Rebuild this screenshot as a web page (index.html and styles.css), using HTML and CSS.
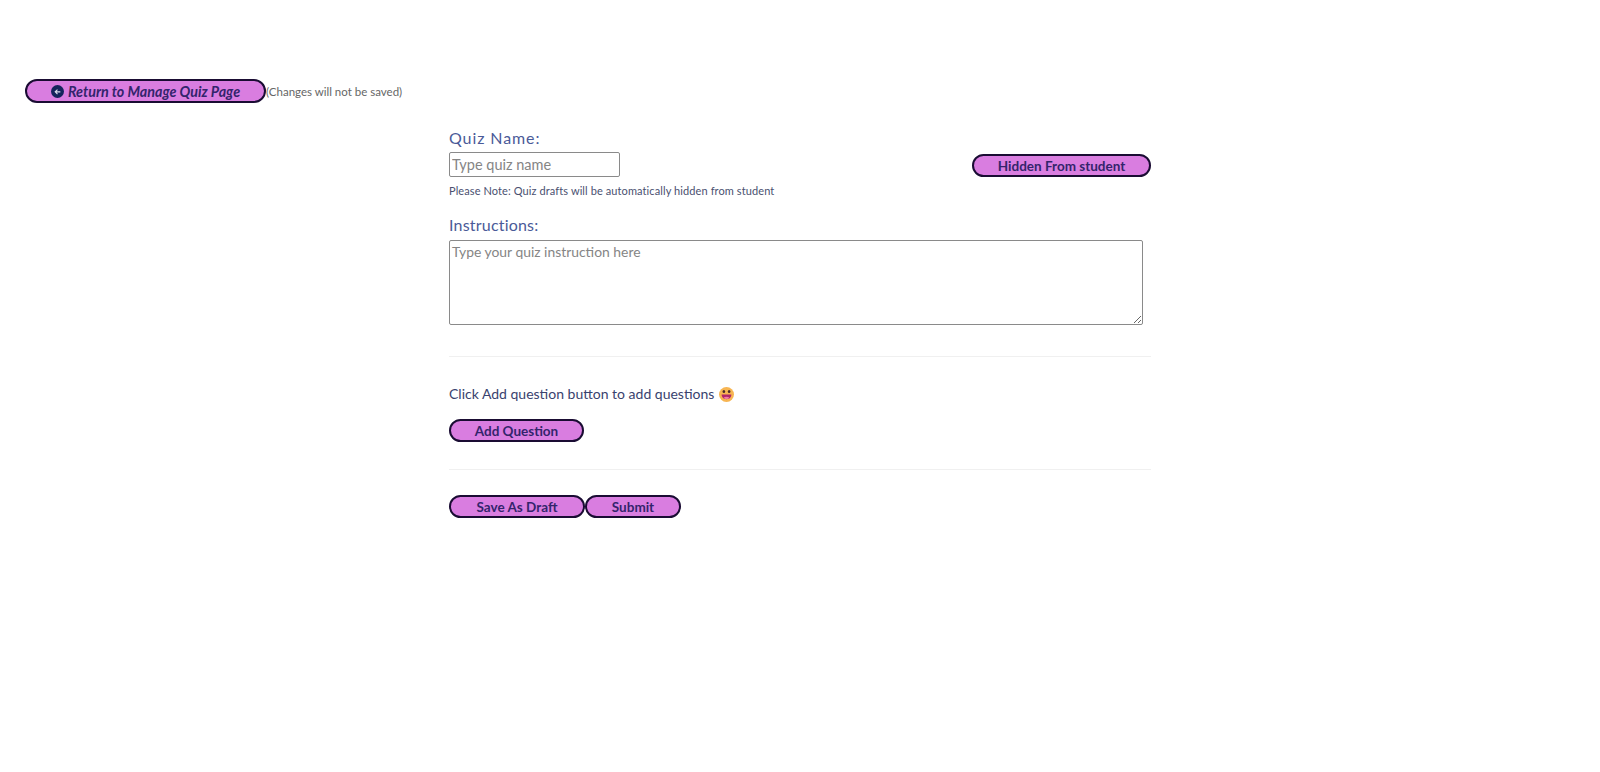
FILE: index.html
```html
<!DOCTYPE html>
<html lang="en">
<head>
  <meta charset="UTF-8" />
  <meta name="viewport" content="width=device-width, initial-scale=1.0"/>
  <title>Create Quiz</title>
  <link rel="stylesheet" href="styles.css">
</head>
<body>

  <div class="back-row">
    <button class="pill back-btn">
      <svg class="back-icon" viewBox="0 0 16 16" width="13" height="13">
        <circle cx="8" cy="8" r="8" fill="#14245c"/>
        <path d="M11.5 8.4H5.5M8 5.6L5.2 8.4L8 11.2" fill="none" stroke="#d9dcec" stroke-width="1.4"/>
      </svg>
      Return to Manage Quiz Page
    </button>
    <span class="back-note">(Changes will not be saved)</span>
  </div>

  <form class="quiz-form">
    <h3 class="field-title quiz-title">Quiz Name:</h3>
    <div class="name-row">
      <input class="name-input" type="text" placeholder="Type quiz name">
      <button type="button" class="pill hidden-btn">Hidden From student</button>
    </div>
    <p class="note">Please Note: Quiz drafts will be automatically hidden from student</p>

    <h3 class="field-title instr-title">Instructions:</h3>
    <textarea class="instr-input" placeholder="Type your quiz instruction here"></textarea>

    <hr class="line first-line">

    <p class="add-text">
      Click Add question button to add questions
      <svg class="emoji" viewBox="0 0 16 16" width="15" height="15">
        <circle cx="8" cy="8" r="8" fill="#f7b552"/>
        <ellipse cx="5.2" cy="4.8" rx="1.4" ry="1.7" fill="#4a2a2a"/>
        <ellipse cx="10.8" cy="4.8" rx="1.4" ry="1.7" fill="#4a2a2a"/>
        <path d="M2.8 8h10.4c0 3-2.4 5-5.2 5S2.8 11 2.8 8z" fill="#b0246a"/>
        <path d="M5 11.2c1.6-1.1 4.4-1.1 6 0c-1.6 2.2-4.4 2.2-6 0z" fill="#f07aa6"/>
      </svg>
    </p>
    <button type="button" class="pill add-btn">Add Question</button>

    <hr class="line second-line">

    <div class="actions">
      <button type="button" class="pill draft-btn">Save As Draft</button>
      <button type="submit" class="pill submit-btn">Submit</button>
    </div>
  </form>

</body>
</html>
```

FILE: styles.css
```css
body {
  font-family: 'Lato', 'Noto Sans', sans-serif;
  background: #fff;
  color: #2f3a66;
  margin: 0;
  padding: 79px 0 0;
}

.pill {
  background: #d97de0;
  color: #33246c;
  font-family: 'Lato', sans-serif;
  font-size: 13.5px;
  font-weight: 700;
  height: 23px;
  padding: 0;
  border: 2px solid #1a0c33;
  border-radius: 14px;
  box-sizing: border-box;
  white-space: nowrap;
}

.back-row {
  display: flex;
  align-items: center;
  padding-left: 25px;
}

.back-btn {
  width: 241px;
  height: 24px;
  font-style: italic;
  font-size: 14.3px;
  display: flex;
  align-items: center;
  justify-content: center;
  gap: 4px;
}

.back-icon {
  flex: none;
}

.back-note {
  font-size: 11.5px;
  color: #666;
}

.quiz-form {
  width: 702px;
  margin: 0 0 0 449px;
}

.field-title {
  font-family: 'Lato', sans-serif;
  font-weight: 400;
  color: #4a5a98;
  margin: 0;
  font-size: 16px;
  line-height: 20px;
}

.quiz-title {
  margin-top: 25px;
  letter-spacing: 0.9px;
}

.name-row {
  display: flex;
  justify-content: space-between;
  align-items: center;
  margin-top: 4px;
}

.name-input {
  width: 171px;
  height: 25px;
  box-sizing: border-box;
  padding: 0 2px;
  font-family: 'Lato', sans-serif;
  font-size: 14.5px;
  border: 1px solid #8a8a8a;
  border-radius: 2px;
}

.hidden-btn {
  width: 179px;
  margin-top: 2px;
}

.note {
  font-size: 11px;
  line-height: 14px;
  margin: 7px 0 0;
  color: #4a5070;
  letter-spacing: 0.1px;
}

.instr-title {
  margin-top: 17px;
  letter-spacing: 0.2px;
}

.instr-input {
  display: block;
  width: 694px;
  height: 85px;
  box-sizing: border-box;
  margin-top: 5px;
  padding: 2px;
  font-family: 'Lato', sans-serif;
  font-size: 13.9px;
  border: 1px solid #8a8a8a;
  border-radius: 2px;
}

input::placeholder,
textarea::placeholder {
  color: #858585;
}

.line {
  border: none;
  border-top: 1px solid #f0f0f0;
  margin: 0;
}

.first-line {
  margin-top: 31px;
}

.add-text {
  display: flex;
  align-items: center;
  gap: 5px;
  font-size: 14px;
  line-height: 18px;
  margin: 28px 0 0;
  color: #39426e;
}

.add-btn {
  display: block;
  width: 135px;
  margin-top: 16px;
}

.second-line {
  margin-top: 27px;
}

.actions {
  display: flex;
  margin-top: 25px;
}

.draft-btn {
  width: 136px;
}

.submit-btn {
  width: 96px;
}
```
